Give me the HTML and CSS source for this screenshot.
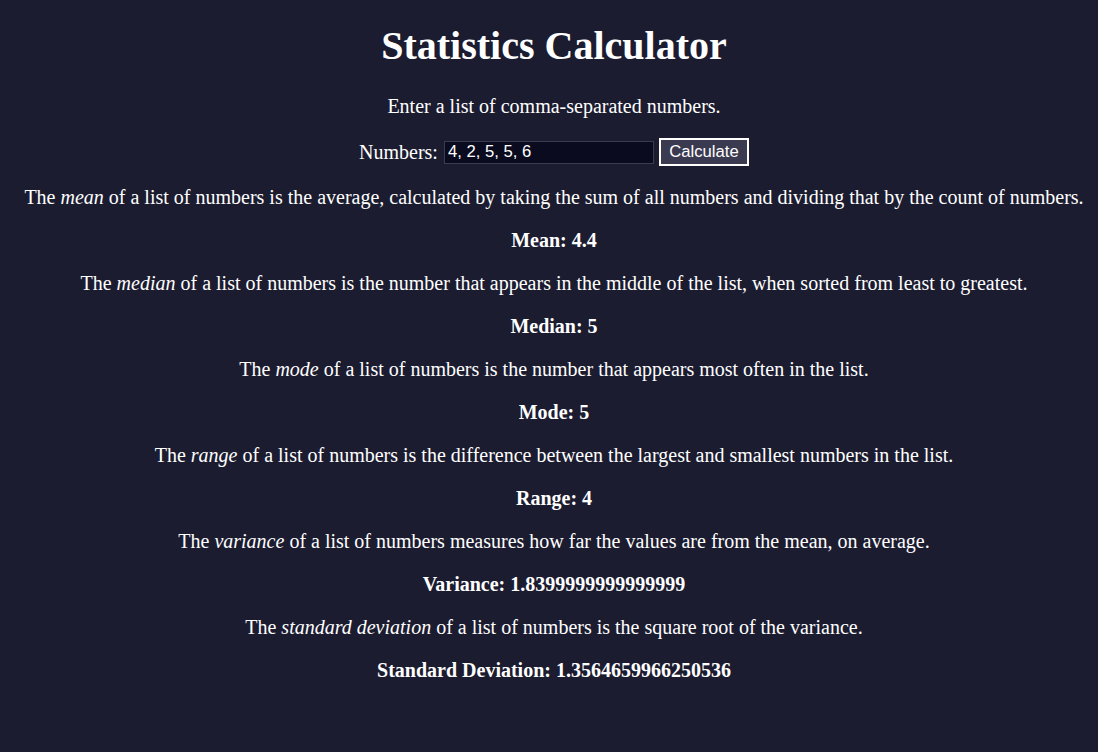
FILE: index.html
```html
<!DOCTYPE html>
<html>
<head>
<meta charset="utf-8">
<title>Statistics Calculator</title>
<link rel="stylesheet" href="styles.css">
</head>
<body>
<h1 class="title">Statistics Calculator</h1>
<p>Enter a list of comma-separated numbers.</p>
<div class="form">
  <label for="nums">Numbers:</label>
  <input id="nums" class="nums" type="text" value="4, 2, 5, 5, 6">
  <button class="calc">Calculate</button>
</div>
<p>The <em>mean</em> of a list of numbers is the average, calculated by taking the sum of all numbers and dividing that by the count of numbers.</p>
<p class="result">Mean: 4.4</p>
<p>The <em>median</em> of a list of numbers is the number that appears in the middle of the list, when sorted from least to greatest.</p>
<p class="result">Median: 5</p>
<p>The <em>mode</em> of a list of numbers is the number that appears most often in the list.</p>
<p class="result">Mode: 5</p>
<p>The <em>range</em> of a list of numbers is the difference between the largest and smallest numbers in the list.</p>
<p class="result">Range: 4</p>
<p>The <em>variance</em> of a list of numbers measures how far the values are from the mean, on average.</p>
<p class="result">Variance: 1.8399999999999999</p>
<p>The <em>standard deviation</em> of a list of numbers is the square root of the variance.</p>
<p class="result">Standard Deviation: 1.3564659966250536</p>
</body>
</html>
```
FILE: styles.css
```css
html, body {
  background: #1c1c30;
}
body {
  margin: 0;
  padding: 0 0 0 10px;
  color: #ffffff;
  font-family: "Liberation Serif", "Times New Roman", serif;
  font-size: 20px;
  text-align: center;
}
.title {
  font-size: 40px;
  line-height: 46px;
  margin: 23px 0 26px;
}
p {
  margin: 20px 0;
  line-height: 23px;
}
.result {
  font-weight: bold;
}
.form {
  display: flex;
  justify-content: center;
  align-items: center;
  height: 28px;
}
.form label {
  margin-right: 6px;
}
.nums {
  width: 210px;
  height: 23px;
  box-sizing: border-box;
  background: #0b0b20;
  color: #ffffff;
  border: 1px solid #3a3a50;
  font-family: "Liberation Sans", Arial, sans-serif;
  font-size: 16.67px;
  padding: 0 3px;
  margin: 0 5px 0 0;
}
.calc {
  width: 90px;
  height: 28px;
  box-sizing: border-box;
  background: #3a3a50;
  color: #ffffff;
  border: 2px solid #ffffff;
  font-family: "Liberation Sans", Arial, sans-serif;
  font-size: 16.67px;
  padding: 0;
  margin: 0;
}
```
